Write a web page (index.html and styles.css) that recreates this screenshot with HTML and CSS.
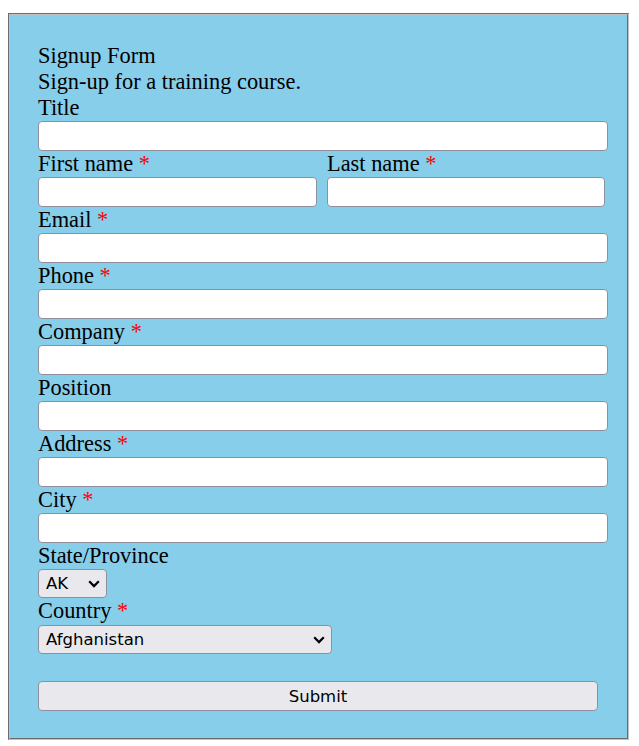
FILE: index.html
```html
<!DOCTYPE html>
<html>
<head>
<meta charset="utf-8">
<link rel="stylesheet" href="styles.css">
</head>
<body>
<div class="page">
  <form class="box">
    <div class="line">Signup Form</div>
    <div class="line">Sign-up for a training course.</div>

    <label class="line">Title</label>
    <input class="field" type="text">

    <div class="names">
      <div class="col">
        <label class="line">First name <span class="req">*</span></label>
        <input class="field" type="text">
      </div>
      <div class="col">
        <label class="line">Last name <span class="req">*</span></label>
        <input class="field" type="text">
      </div>
    </div>

    <label class="line">Email <span class="req">*</span></label>
    <input class="field" type="text">

    <label class="line">Phone <span class="req">*</span></label>
    <input class="field" type="text">

    <label class="line">Company <span class="req">*</span></label>
    <input class="field" type="text">

    <label class="line">Position</label>
    <input class="field" type="text">

    <label class="line">Address <span class="req">*</span></label>
    <input class="field" type="text">

    <label class="line">City <span class="req">*</span></label>
    <input class="field" type="text">

    <label class="line">State/Province</label>
    <div class="selwrap sel-state">
      <select class="sel"><option>AK</option></select>
      <svg class="chev" width="12" height="8" viewBox="0 0 12 8"><path d="M1.2 1.3 L6 6.1 L10.8 1.3" fill="none" stroke="#000" stroke-width="2.2"/></svg>
    </div>

    <label class="line">Country <span class="req">*</span></label>
    <div class="selwrap sel-country">
      <select class="sel"><option>Afghanistan</option></select>
      <svg class="chev" width="12" height="8" viewBox="0 0 12 8"><path d="M1.2 1.3 L6 6.1 L10.8 1.3" fill="none" stroke="#000" stroke-width="2.2"/></svg>
    </div>

    <button class="submit" type="button">Submit</button>
  </form>
</div>
</body>
</html>
```

FILE: styles.css
```css
html, body {
  margin: 0;
  padding: 0;
  background: #ffffff;
}

.page {
  padding: 13px 10px 0 8px;
}

.box {
  box-sizing: border-box;
  width: 621px;
  margin: 0;
  background: #87ceeb;
  border: 2px groove #c0c0c0;
  padding: 28px 19px 27px 28px;
  display: flex;
  flex-direction: column;
  align-items: flex-start;
  font-family: "Liberation Serif", "Times New Roman", serif;
  font-size: 22.4px;
  color: #000;
}

.line {
  display: block;
  height: 26px;
  line-height: 26px;
  white-space: nowrap;
}

.req {
  color: #ff0000;
}

.field {
  box-sizing: border-box;
  display: block;
  width: 570px;
  height: 30px;
  margin: 0;
  border: 1px solid #8f8f9d;
  border-radius: 4px;
  background: #ffffff;
  padding: 0 4px;
}

.names {
  display: grid;
  grid-template-columns: 279px 278px;
  column-gap: 10px;
}

.names .field {
  width: 100%;
}

.selwrap {
  position: relative;
  height: 29px;
}

.sel-state {
  width: 69px;
}

.sel-country {
  width: 294px;
  margin-top: 1px;
}

.sel {
  -webkit-appearance: none;
  appearance: none;
  box-sizing: border-box;
  width: 100%;
  height: 29px;
  margin: 0;
  border: 1px solid #8f8f9d;
  border-radius: 4px;
  background: #e9e9ed;
  padding: 0 24px 0 7px;
  font-family: "DejaVu Sans", sans-serif;
  font-size: 16.5px;
  color: #000;
}

.chev {
  position: absolute;
  right: 7px;
  top: 11px;
  pointer-events: none;
}

.submit {
  box-sizing: border-box;
  width: 560px;
  height: 30px;
  margin-top: 27px;
  border: 1px solid #8f8f9d;
  border-radius: 4px;
  background: #e9e9ed;
  font-family: "DejaVu Sans", sans-serif;
  font-size: 16.5px;
  color: #000;
  padding: 0;
}
```
